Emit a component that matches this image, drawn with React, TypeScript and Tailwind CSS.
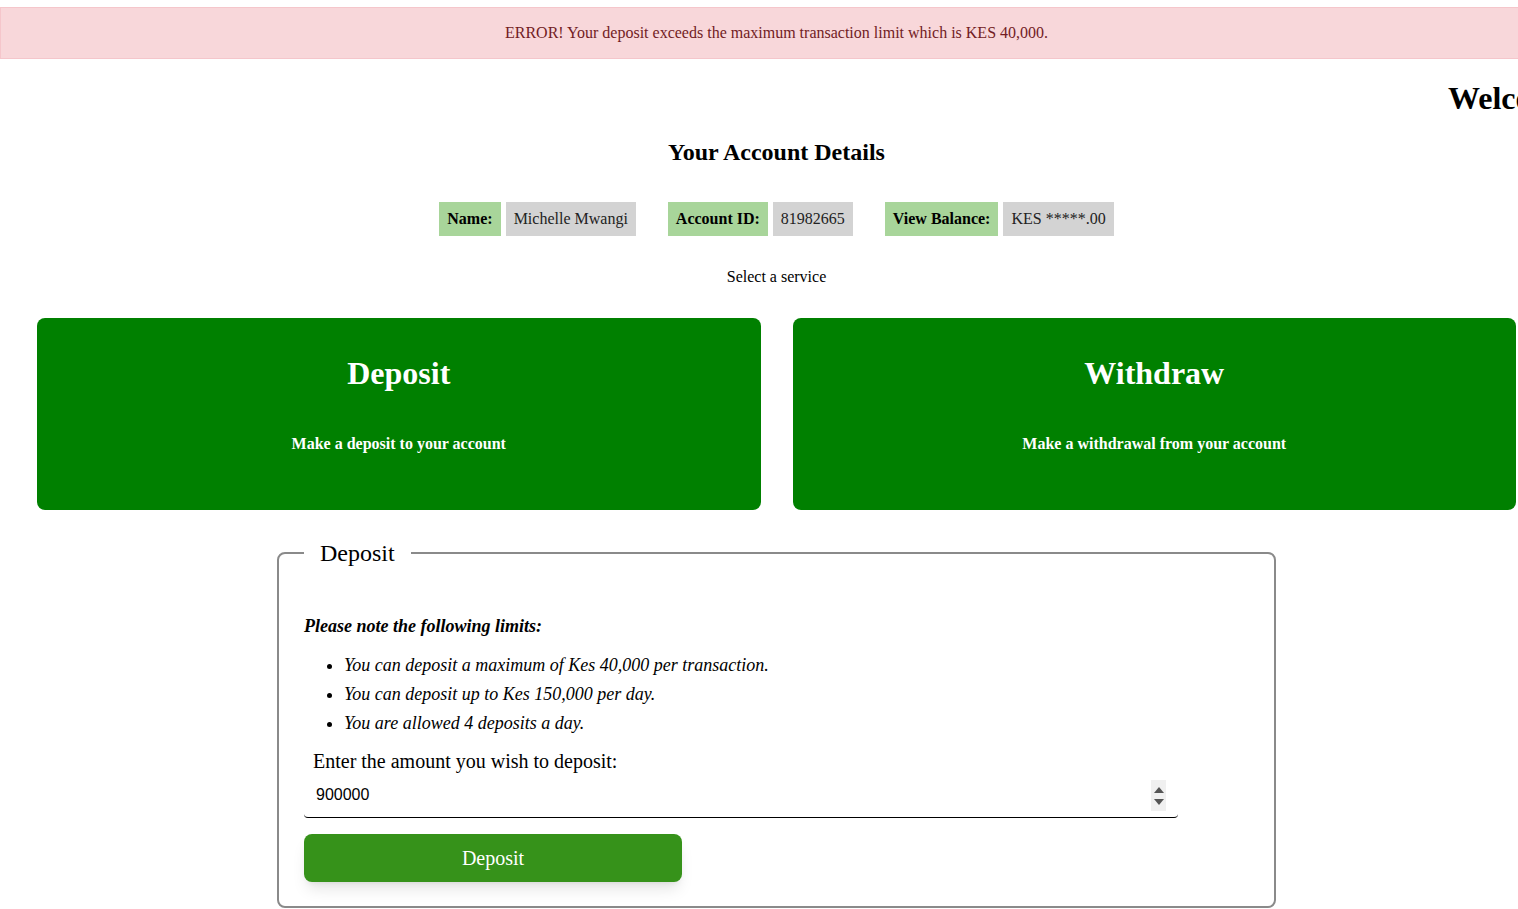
export default function App() {
  const serif = { fontFamily: '"Liberation Serif", "Times New Roman", serif' };
  return (
    <div className="w-full overflow-hidden bg-white text-black" style={serif}>
      <div className="w-[1553px]">
        <div className="mt-[7px] border border-[#f5c6cb] bg-[#f8d7da] py-4 text-center text-base leading-[18px] text-[#721c24]">
          ERROR! Your deposit exceeds the maximum transaction limit which is KES 40,000.
        </div>

        <h1 className="mt-[21px] whitespace-nowrap pl-[1448px] text-[32px] font-bold leading-[37px]">
          Welcome, Michelle Mwangi
        </h1>

        <h2 className="mt-[21px] text-center text-2xl font-bold leading-[28px]">
          Your Account Details
        </h2>

        <div className="mt-[36px] flex justify-center gap-8 text-base leading-[18px]">
          {[
            ["Name:", "Michelle Mwangi"],
            ["Account ID:", "81982665"],
            ["View Balance:", "KES *****.00"],
          ].map(([k, v]) => (
            <div key={k} className="flex gap-[5px]">
              <span className="bg-[#a8d59a] px-2 py-2 font-bold">{k}</span>
              <span className="bg-[#d3d3d3] px-2 py-2 text-[#222]">{v}</span>
            </div>
          ))}
        </div>

        <p className="mt-[32px] text-center text-base leading-[18px]">Select a service</p>

        <div className="mt-[32px] grid grid-cols-2 gap-8 px-[37px]">
          {[
            ["Deposit", "Make a deposit to your account"],
            ["Withdraw", "Make a withdrawal from your account"],
          ].map(([t, s]) => (
            <div key={t} className="flex h-[192px] flex-col items-center rounded-lg bg-[#008000] pt-[37px] text-white">
              <h3 className="text-[32px] font-bold leading-[37px]">{t}</h3>
              <p className="mt-[43px] text-base font-bold leading-[18px]">{s}</p>
            </div>
          ))}
        </div>

        <fieldset className="mx-auto mt-[29px] w-[999px] rounded-lg border-2 border-[#8a8a8a] px-[25px] pb-6">
          <legend className="px-4 text-2xl leading-[28px]">Deposit</legend>
          <p className="mt-[49px] text-lg font-bold italic leading-[21px]">Please note the following limits:</p>
          <ul className="mt-[18px] list-disc space-y-2 pl-10 text-lg italic leading-[21px]">
            <li>You can deposit a maximum of Kes 40,000 per transaction.</li>
            <li>You can deposit up to Kes 150,000 per day.</li>
            <li>You are allowed 4 deposits a day.</li>
          </ul>
          <label className="mt-[16px] block pl-[9px] text-xl leading-[23px]">
            Enter the amount you wish to deposit:
          </label>
          <div className="relative w-[874px]">
            <input
              type="number"
              defaultValue={900000}
              className="block h-[45px] w-full appearance-none rounded-sm border-0 border-b border-black px-3 text-base outline-none [&::-webkit-inner-spin-button]:appearance-none"
              style={{ fontFamily: '"Liberation Sans", Arial, sans-serif' }}
            />
            <div className="absolute right-[12px] top-[7px] flex h-[31px] w-[15px] flex-col items-center justify-center gap-[6px] bg-[#f0f0f0]">
              <svg width="10" height="6" viewBox="0 0 10 6"><path d="M0 6 L5 0 L10 6 Z" fill="#555" /></svg>
              <svg width="10" height="6" viewBox="0 0 10 6"><path d="M0 0 L10 0 L5 6 Z" fill="#555" /></svg>
            </div>
          </div>
          <button className="mt-[16px] block h-[48px] w-[378px] rounded-lg bg-[#36921a] text-xl text-white shadow-lg">
            Deposit
          </button>
        </fieldset>
      </div>
    </div>
  );
}
